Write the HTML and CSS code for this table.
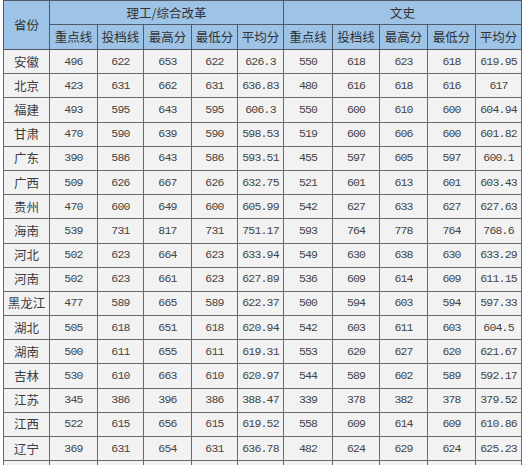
FILE: index.html
```html
<!DOCTYPE html>
<html lang="zh">
<head>
<meta charset="utf-8">
<title>分数线</title>
<link rel="stylesheet" href="styles.css">
</head>
<body>
<table class="scores">
  <colgroup>
    <col class="c46"><col class="c48"><col class="c46"><col class="c48"><col class="c46"><col class="c46">
    <col class="c49"><col class="c47"><col class="c48"><col class="c48"><col class="c46">
  </colgroup>
  <thead>
    <tr class="h1">
      <th rowspan="2" class="prov">省份</th>
      <th colspan="5" class="group">理工/综合改革</th>
      <th colspan="5" class="group">文史</th>
    </tr>
    <tr class="h2">
      <th>重点线</th><th>投档线</th><th>最高分</th><th>最低分</th><th>平均分</th>
      <th>重点线</th><th>投档线</th><th>最高分</th><th>最低分</th><th>平均分</th>
    </tr>
  </thead>
  <tbody>
    <tr><td class="p">安徽</td><td>496</td><td>622</td><td>653</td><td>622</td><td>626.3</td><td>550</td><td>618</td><td>623</td><td>618</td><td>619.95</td></tr>
    <tr><td class="p">北京</td><td>423</td><td>631</td><td>662</td><td>631</td><td>636.83</td><td>480</td><td>616</td><td>618</td><td>616</td><td>617</td></tr>
    <tr><td class="p">福建</td><td>493</td><td>595</td><td>643</td><td>595</td><td>606.3</td><td>550</td><td>600</td><td>610</td><td>600</td><td>604.94</td></tr>
    <tr><td class="p">甘肃</td><td>470</td><td>590</td><td>639</td><td>590</td><td>598.53</td><td>519</td><td>600</td><td>606</td><td>600</td><td>601.82</td></tr>
    <tr><td class="p">广东</td><td>390</td><td>586</td><td>643</td><td>586</td><td>593.51</td><td>455</td><td>597</td><td>605</td><td>597</td><td>600.1</td></tr>
    <tr><td class="p">广西</td><td>509</td><td>626</td><td>667</td><td>626</td><td>632.75</td><td>521</td><td>601</td><td>613</td><td>601</td><td>603.43</td></tr>
    <tr><td class="p">贵州</td><td>470</td><td>600</td><td>649</td><td>600</td><td>605.99</td><td>542</td><td>627</td><td>633</td><td>627</td><td>627.63</td></tr>
    <tr><td class="p">海南</td><td>539</td><td>731</td><td>817</td><td>731</td><td>751.17</td><td>593</td><td>764</td><td>778</td><td>764</td><td>768.6</td></tr>
    <tr><td class="p">河北</td><td>502</td><td>623</td><td>664</td><td>623</td><td>633.94</td><td>549</td><td>630</td><td>638</td><td>630</td><td>633.29</td></tr>
    <tr><td class="p">河南</td><td>502</td><td>623</td><td>661</td><td>623</td><td>627.89</td><td>536</td><td>609</td><td>614</td><td>609</td><td>611.15</td></tr>
    <tr><td class="p">黑龙江</td><td>477</td><td>589</td><td>665</td><td>589</td><td>622.37</td><td>500</td><td>594</td><td>603</td><td>594</td><td>597.33</td></tr>
    <tr><td class="p">湖北</td><td>505</td><td>618</td><td>651</td><td>618</td><td>620.94</td><td>542</td><td>603</td><td>611</td><td>603</td><td>604.5</td></tr>
    <tr><td class="p">湖南</td><td>500</td><td>611</td><td>655</td><td>611</td><td>619.31</td><td>553</td><td>620</td><td>627</td><td>620</td><td>621.67</td></tr>
    <tr><td class="p">吉林</td><td>530</td><td>610</td><td>663</td><td>610</td><td>620.97</td><td>544</td><td>589</td><td>602</td><td>589</td><td>592.17</td></tr>
    <tr><td class="p">江苏</td><td>345</td><td>386</td><td>396</td><td>386</td><td>388.47</td><td>339</td><td>378</td><td>382</td><td>378</td><td>379.52</td></tr>
    <tr><td class="p">江西</td><td>522</td><td>615</td><td>656</td><td>615</td><td>619.52</td><td>558</td><td>609</td><td>614</td><td>609</td><td>610.86</td></tr>
    <tr><td class="p">辽宁</td><td>369</td><td>631</td><td>654</td><td>631</td><td>636.78</td><td>482</td><td>624</td><td>629</td><td>624</td><td>625.23</td></tr>
    <tr class="tail"><td class="p"></td><td></td><td></td><td></td><td></td><td></td><td></td><td></td><td></td><td></td><td></td></tr>
  </tbody>
</table>
</body>
</html>
```

FILE: styles.css
```css
html, body {
  margin: 0;
  padding: 0;
  background: #ffffff;
  overflow: hidden;
}

.scores {
  margin-left: 3px;
  border-collapse: collapse;
  table-layout: fixed;
  width: 518px;
  font-family: "Noto Sans CJK SC", "Noto Sans", sans-serif;
  color: #3a3a3a;
}

.c46 { width: 46px; }
.c47 { width: 47px; }
.c48 { width: 48px; }
.c49 { width: 49px; }

.scores th {
  background: #9dc3e6;
  border: 1px solid #4f5a66;
  font-weight: normal;
  font-size: 12.5px;
  color: #333333;
  text-align: center;
  padding: 0;
  line-height: 14px;
}

.scores .h1 th { height: 23px; }
.scores .h2 th { height: 24px; }

.scores td {
  background: #f2f2f2;
  border: 1px solid #6a6a6a;
  height: 23.2px;
  padding: 0;
  text-align: center;
  font-family: "Liberation Mono", "DejaVu Sans Mono", monospace;
  font-size: 11.5px;
  letter-spacing: -0.8px;
  color: #454545;
  line-height: 14px;
  white-space: nowrap;
}

.scores td.p {
  font-family: "Noto Sans CJK SC", "Noto Sans", sans-serif;
  font-size: 12.5px;
  letter-spacing: 0;
  color: #3d3d3d;
}

.scores .tail td { height: 20px; }
```
